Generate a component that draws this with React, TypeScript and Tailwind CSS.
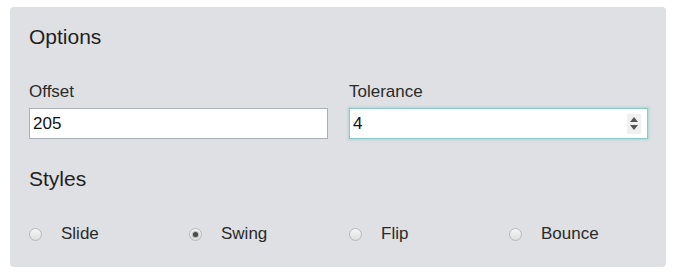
import React from "react";

function Radio({ label, checked }: { label: string; checked?: boolean }) {
  return (
    <div className="flex items-center">
      <span className="relative flex h-[13px] w-[13px] items-center justify-center rounded-full border border-[#b9b9b9] bg-gradient-to-b from-[#f6f6f6] to-[#dedede]">
        {checked && <span className="h-[5px] w-[5px] rounded-full bg-[#4a4a4a] shadow-[0_0_1px_1px_rgba(80,80,80,0.35)]" />}
      </span>
      <span className="ml-[19px] text-[17px] leading-[20px] text-[#2a2a2a]">{label}</span>
    </div>
  );
}

export default function App() {
  return (
    <div className="min-h-[279px] bg-white pl-[10px] pt-[7px] font-['Liberation_Sans',Arial,sans-serif]">
      <div className="h-[260px] w-[656px] rounded-[4px] bg-[#dee0e4] pl-[19px] pr-[18px] pt-[17px]">
        <h2 className="text-[21px] leading-[25px] text-[#1f1f1f]">Options</h2>
        <div className="mt-[33px] grid grid-cols-2 gap-x-[21px]">
          <div>
            <div className="text-[17px] leading-[20px] text-[#2a2a2a]">Offset</div>
            <div className="mt-[6px] flex h-[31px] items-center border border-[#a9b0b8] bg-white pl-[3px] text-[17px] leading-[20px] text-[#111]">
              205
            </div>
          </div>
          <div>
            <div className="text-[17px] leading-[20px] text-[#2a2a2a]">Tolerance</div>
            <div className="mt-[6px] flex h-[31px] items-center justify-between border border-[#8fcac8] bg-white pl-[3px] pr-[6px] text-[17px] leading-[20px] text-[#111] shadow-[0_0_2px_1px_rgba(140,205,202,0.6)]">
              <span>4</span>
              <span className="flex h-[20px] w-[14px] flex-col items-center justify-center gap-[3px] bg-[#f0f0f0]">
                <svg width="8" height="5" viewBox="0 0 8 5">
                  <path d="M0 5 L4 0 L8 5 Z" fill="#555" />
                </svg>
                <svg width="8" height="5" viewBox="0 0 8 5">
                  <path d="M0 0 L4 5 L8 0 Z" fill="#555" />
                </svg>
              </span>
            </div>
          </div>
        </div>
        <h2 className="mt-[27px] text-[21px] leading-[25px] text-[#1f1f1f]">Styles</h2>
        <div className="mt-[33px] grid grid-cols-4 gap-x-[21px]">
          <Radio label="Slide" />
          <Radio label="Swing" checked />
          <Radio label="Flip" />
          <Radio label="Bounce" />
        </div>
      </div>
    </div>
  );
}
